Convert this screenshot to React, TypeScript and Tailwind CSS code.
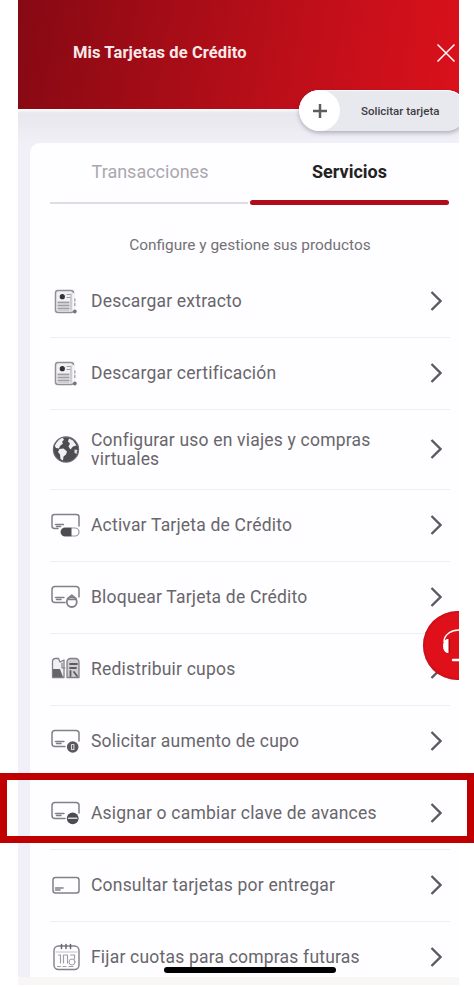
import type { ReactNode } from "react";

type Service = {
  label: ReactNode;
  icon: ReactNode;
  tall?: boolean;
};

function Icon({ children }: { children: ReactNode }) {
  return (
    <svg
      viewBox="0 0 30 30"
      className="h-[30px] w-[30px] shrink-0"
      fill="none"
      stroke="#828085"
      strokeWidth="1.5"
      strokeLinecap="round"
      strokeLinejoin="round"
    >
      {children}
    </svg>
  );
}

function DocumentIcon() {
  return (
    <Icon>
      <rect x="5.5" y="3.5" width="18" height="22" rx="2.5" fill="#f1f0f2" stroke="#929095" />
      <rect x="7.5" y="14" width="12" height="10" fill="#cfcdd1" stroke="none" />
      <circle cx="12.3" cy="9.7" r="2.6" fill="#333" stroke="none" />
      <path d="M17 7.5h3M17 10.5h3M8 15.5h11M8 18.5h11M8 21.5h11" strokeWidth="1" stroke="#a19fa4" />
      <path d="M23.5 7v17" stroke="#fefdff" strokeWidth="2" />
      <path d="M21 7v16" stroke="#aaa8ad" strokeWidth="1" />
      <path d="M24.8 12v9" strokeDasharray="2 2.5" stroke="#aaa8ad" />
      <circle cx="24.8" cy="24.5" r="1.9" fill="#77757a" stroke="none" />
    </Icon>
  );
}

function GlobeIcon() {
  return (
    <Icon>
      <circle cx="16" cy="14.5" r="12.6" fill="#4d4c50" stroke="#6b696e" strokeWidth="1.2" />
      <path
        d="M4.8 11C6.2 7 9 4 12.5 2.7L14 4.5l-2 2.5 1 1.5-3 2.5-1 2.5-3-.5z"
        fill="#f1f0f2"
        stroke="none"
      />
      <path d="M19 3.500l4 2 3.5 5-3.5 1-2.5 3-2-3 1.5-3-2-2z" fill="#f1f0f2" stroke="none" />
      <path
        d="M9.5 14l4-.5 3.500 3-1 3-2.5 2-.5 4-2.5-1.5-.5-4.500-2-2.5z"
        fill="#f1f0f2"
        stroke="none"
      />
      <path d="M24.5 14.500l3 .5-1 4-2-1z" fill="#dddbdf" stroke="none" />
    </Icon>
  );
}

function ActivateIcon() {
  return (
    <Icon>
      <path d="M8 17.5H4.5A2.5 2.5 0 0 1 2 15V6a2.5 2.5 0 0 1 2.5-2.5h22A2.5 2.5 0 0 1 29 6v9" />
      <path d="M5.5 13.5h8M6.5 15.5h4" strokeWidth="1.4" />
      <rect x="11" y="17" width="18" height="8" rx="4" fill="#fff" stroke="#99979c" strokeWidth="1.2" />
      <path d="M15 16.800h6.5v8.400H15a4.200 4.200 0 0 1 0-8.400z" fill="#4d4c50" stroke="none" />
    </Icon>
  );
}

function CardWith({ children }: { children: ReactNode }) {
  return (
    <Icon>
      <path d="M15 19.5H5a3 3 0 0 1-3-3v-10a3 3 0 0 1 3-3h21a3 3 0 0 1 3 3V14" />
      <path d="M5.5 14.5H14M6.5 16.5H11" strokeWidth="1.4" />
      {children}
    </Icon>
  );
}

function TransferIcon() {
  return (
    <Icon>
      <path d="M2.5 22.5V6a3 3 0 0 1 3-2.5h3L10 7l4-2v17.5z" fill="#f1f0f2" strokeWidth="1.3" />
      <path
        d="M17 22.5V7a3.500 3.5 0 0 1 3.500-3.500h5A3.500 3.500 0 0 1 29 7v15.5z"
        fill="#cfcdd1"
        strokeWidth="1.3"
      />
      <path d="M3 14h7l3 8H3z" fill="#67656a" stroke="none" />
      <path d="M20 9h7M20 13h6M20.5 21v-5M24 17l3 4" stroke="#5d5b60" strokeWidth="1.8" />
      <path d="M12 8v5h3" strokeWidth="1.2" />
    </Icon>
  );
}

function CardIcon() {
  return (
    <Icon>
      <rect x="3" y="6.5" width="26" height="15.5" rx="2.5" />
      <path d="M5.5 17H13M5.5 19H10" strokeWidth="1.6" />
    </Icon>
  );
}

function CalendarIcon() {
  return (
    <Icon>
      <rect x="4" y="3" width="25" height="23.5" rx="4.5" strokeWidth="1.4" />
      <path d="M6 9h21" strokeWidth="0.8" stroke="#b1afb4" />
      <path d="M11.5 1.500v4M16 1.500v4M20.5 1.500v4" strokeWidth="1.500" stroke="#666468" />
      <path
        d="M8.5 12h2v8M13.5 20v-8h4v8M20.5 12h4v4M7.500 23.500h3M13 23.500h3M19 23.500h4"
        strokeWidth="1.2"
        stroke="#a19fa4"
      />
      <circle cx="22" cy="19" r="3" strokeWidth="1" stroke="#a19fa4" />
    </Icon>
  );
}

const services: Service[] = [
  { label: "Descargar extracto", icon: <DocumentIcon /> },
  { label: "Descargar certificación", icon: <DocumentIcon /> },
  {
    label: (
      <>
        Configurar uso en viajes y compras
        <br />
        virtuales
      </>
    ),
    icon: <GlobeIcon />,
    tall: true,
  },
  { label: "Activar Tarjeta de Crédito", icon: <ActivateIcon /> },
  {
    label: "Bloquear Tarjeta de Crédito",
    icon: (
      <CardWith>
        <path d="M17.5 15.500l4.300-3.500 4.300 3.500" fill="#fff" />
        <circle cx="21.8" cy="19" r="5" fill="#fff" strokeWidth="1.8" />
        <path d="M18 16.300h7.600" strokeWidth="1.8" />
      </CardWith>
    ),
  },
  { label: "Redistribuir cupos", icon: <TransferIcon /> },
  {
    label: "Solicitar aumento de cupo",
    icon: (
      <CardWith>
        <circle cx="22.7" cy="20" r="5.8" fill="#5a585d" stroke="none" />
        <path d="M21.5 17.500h2.400v5h-2.400z" stroke="#d8d6da" strokeWidth="1.1" />
      </CardWith>
    ),
  },
  {
    label: "Asignar o cambiar clave de avances",
    icon: (
      <CardWith>
        <circle cx="22.7" cy="19.3" r="5.9" fill="#4d4c50" stroke="none" />
        <path d="M18.5 19.300h8.400" stroke="#d8d6da" strokeWidth="1.5" />
      </CardWith>
    ),
  },
  { label: "Consultar tarjetas por entregar", icon: <CardIcon /> },
  { label: "Fijar cuotas para compras futuras", icon: <CalendarIcon /> },
];

function ServiceRow({ service }: { service: Service }) {
  return (
    <li
      className={`flex shrink-0 items-center border-b border-[#f0eef3] ${service.tall ? "h-20" : "h-[72px]"}`}
    >
      {service.icon}
      <span className="ml-[11px] flex-1 whitespace-nowrap text-[17.5px] leading-[19px] tracking-[0.2px] text-[#68666b]">
        {service.label}
      </span>
      <svg
        viewBox="0 0 12 20"
        className="mb-px mr-2 h-5 w-3"
        fill="none"
        stroke="#5c5a5f"
        strokeWidth="2.4"
      >
        <path d="M1.500 1l9 9-9 9" />
      </svg>
    </li>
  );
}

export default function App() {
  return (
    <div className="relative h-[987px] w-[474px] overflow-hidden bg-white font-['Roboto',sans-serif]">
      <div className="relative ml-[18px] flex h-[985px] w-[441px] flex-col overflow-hidden bg-[#f8f7f6]">
        <header className="flex h-[109px] shrink-0 items-start justify-between bg-linear-[100deg,#850913_0%,#a80d17_38%,#c20f1a_68%,#da111b_100%] pl-[55px] pr-[3px] pt-[43px]">
          <h1 className="text-[16.5px] font-bold leading-5 tracking-[0.1px] text-[#fbe9ea]">
            Mis Tarjetas de Crédito
          </h1>
          <svg viewBox="0 0 20 20" className="h-5 w-5" stroke="#fff" strokeWidth="1.5">
            <path d="M1.5 1.500l17 17M18.5 1.500l-17 17" />
          </svg>
        </header>

        <div className="flex h-[868px] shrink-0 flex-col bg-linear-[180deg,#ffffff_0px,#e8e8ee_4px,#e9e9ef_14px,#f1f0f8_34px] pl-3 pt-[34px]">
          <main className="flex h-[834px] flex-col overflow-hidden rounded-tl-[10px] bg-[#fefdff] pl-5 pr-[9px]">
            <div className="flex h-[62px] shrink-0 gap-[2px]">
              <button className="flex h-[62px] w-[198px] flex-col items-center justify-end">
                <span className="mb-[20px] ml-[2px] text-[18px] leading-5 text-[#aaa8ad]">
                  Transacciones
                </span>
                <span className="mb-[1px] h-[2px] w-full bg-[#e1dbe2]" />
              </button>
              <button className="flex h-[62px] w-[199px] flex-col items-center justify-end">
                <span className="mb-[18px] text-[18px] font-bold leading-5 text-[#222]">Servicios</span>
                <span className="h-[5px] w-full rounded-full bg-[#b10c17]" />
              </button>
            </div>
            <p className="mt-[30px] h-[31px] shrink-0 text-center text-[15.4px] leading-5 text-[#737176]">
              Configure y gestione sus productos
            </p>
            <ul className="flex shrink-0 flex-col">
              {services.map((service, i) => (
                <ServiceRow key={i} service={service} />
              ))}
            </ul>
          </main>
        </div>

        {/* action pill, runs past the right edge of the phone */}
        <button className="absolute left-[281px] top-[90px] flex h-[41px] w-[168px] items-center rounded-full bg-[#e8e9ef] shadow-[0_2px_4px_rgba(60,60,80,0.35),inset_0_1px_1px_#fff]">
          <span className="flex h-[41px] w-[41px] items-center justify-center rounded-full bg-white">
            <svg viewBox="0 0 14 14" className="h-[14px] w-[14px]" stroke="#5f5d62" strokeWidth="2.5">
              <path d="M7 0v14M0 7h14" />
            </svg>
          </span>
          <span className="ml-[21px] mt-[2px] whitespace-nowrap text-[11.5px] font-medium text-[#3f3d42]">
            Solicitar tarjeta
          </span>
        </button>

        {/* support button */}
        <button className="absolute left-[405px] top-[611px] h-[69px] w-[69px] rounded-full bg-[#e0101b] shadow-[inset_0_0_3px_#a00812]">
          <svg viewBox="0 0 69 69" className="h-[69px] w-[69px]" fill="none" stroke="#fff">
            <path d="M21 31c0-16 31-16 31 0" strokeWidth="1.5" />
            <path
              d="M25.5 28v14h-1.500c-2.500-1-4-3.500-4-7s1.500-6 4-7z"
              fill="#fff"
              stroke="none"
            />
            <path d="M47.500 28v14H49c2.500-1 4-3.500 4-7s-1.500-6-4-7z" fill="#fff" stroke="none" />
            <path d="M26.500 28v14" stroke="#a90b15" strokeWidth="1.2" />
            <path d="M30 49h9" strokeWidth="2.5" strokeLinecap="round" />
          </svg>
        </button>

        <div className="absolute left-[146px] top-[967px] h-[6px] w-[172px] rounded-full bg-black" />
      </div>

      {/* highlight around the selected service */}
      <div className="absolute left-0 top-[773px] h-[70px] w-[474px] border-[7px] border-[#c00000]" />
    </div>
  );
}
